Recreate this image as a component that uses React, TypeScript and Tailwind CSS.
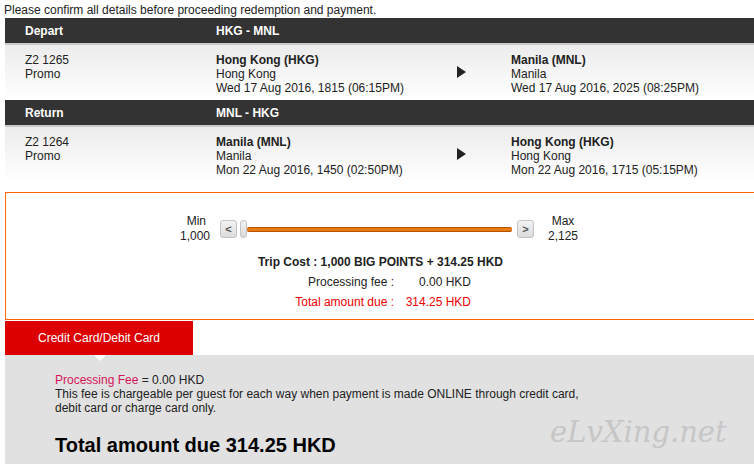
import React from 'react';

type Leg = {
  label: string;
  route: string;
  flight: string;
  fare: string;
  from: { city: string; name: string; time: string };
  to: { city: string; name: string; time: string };
};

const legs: Leg[] = [
  {
    label: 'Depart',
    route: 'HKG - MNL',
    flight: 'Z2 1265',
    fare: 'Promo',
    from: { city: 'Hong Kong (HKG)', name: 'Hong Kong', time: 'Wed 17 Aug 2016, 1815 (06:15PM)' },
    to: { city: 'Manila (MNL)', name: 'Manila', time: 'Wed 17 Aug 2016, 2025 (08:25PM)' },
  },
  {
    label: 'Return',
    route: 'MNL - HKG',
    flight: 'Z2 1264',
    fare: 'Promo',
    from: { city: 'Manila (MNL)', name: 'Manila', time: 'Mon 22 Aug 2016, 1450 (02:50PM)' },
    to: { city: 'Hong Kong (HKG)', name: 'Hong Kong', time: 'Mon 22 Aug 2016, 1715 (05:15PM)' },
  },
];

const Arrow = () => (
  <svg width="10" height="12" viewBox="0 0 10 12">
    <path d="M0 0 L9 6 L0 12 Z" fill="#222" />
  </svg>
);

const LegBlock = ({ leg }: { leg: Leg }) => (
  <div>
    <div className="flex h-[25px] items-center bg-[#333] font-bold text-white">
      <div className="w-[211px] pl-[20px]">{leg.label}</div>
      <div>{leg.route}</div>
    </div>
    <div className="h-[2px] bg-[#c9c9c9]" />
    <div className="flex h-[55px] bg-gradient-to-b from-[#ececec] to-white pt-[8px] leading-[14px] text-[#222]">
      <div className="w-[211px] pl-[20px]">
        <div>{leg.flight}</div>
        <div>{leg.fare}</div>
      </div>
      <div className="w-[241px]">
        <div className="font-bold">{leg.from.city}</div>
        <div>{leg.from.name}</div>
        <div>{leg.from.time}</div>
      </div>
      <div className="w-[54px] pt-[13px]">
        <Arrow />
      </div>
      <div>
        <div className="font-bold">{leg.to.city}</div>
        <div>{leg.to.name}</div>
        <div>{leg.to.time}</div>
      </div>
    </div>
  </div>
);

const SliderButton = ({ label }: { label: string }) => (
  <div className="flex h-[18px] w-[17px] items-center justify-center rounded-[3px] border border-[#c4c4c4] bg-gradient-to-b from-[#f2f2f2] to-[#dcdcdc] text-[11px] font-bold text-[#555]">
    {label}
  </div>
);

export default function App() {
  return (
    <div className="w-[754px] h-[464px] overflow-hidden bg-white font-['Liberation_Sans',Arial,sans-serif] text-[12px] text-[#222]">
      <p className="h-[18px] pl-[4px] leading-[20px]">Please confirm all details before proceeding redemption and payment.</p>

      <div className="ml-[5px] w-[760px]">
        {legs.map((leg) => (
          <LegBlock key={leg.label} leg={leg} />
        ))}

        <div className="mt-[10px] h-[128px] border border-[#ff6600] pt-[19px]">
          <div className="flex items-start">
            <div className="mt-[2px] w-[204px] text-right leading-[15px]">
              <div className="pr-[4px]">Min</div>
              <div>1,000</div>
            </div>
            <div className="ml-[10px] mt-[8px] flex items-center">
              <SliderButton label="<" />
              <div className="ml-[3px] h-[18px] w-[7px] rounded-[3px] border border-[#c4c4c4] bg-gradient-to-b from-[#f4f4f4] to-[#dadada]" />
              <div className="h-[5px] w-[265px] rounded-[2px] border-y border-[#b85400] bg-[#e87a14]" />
              <div className="ml-[5px]">
                <SliderButton label=">" />
              </div>
            </div>
            <div className="ml-[14px] mt-[2px] leading-[15px] text-center">
              <div>Max</div>
              <div>2,125</div>
            </div>
          </div>

          <div className="mt-[9px] w-[749px] text-center font-bold">Trip Cost : 1,000 BIG POINTS + 314.25 HKD</div>
          <div className="mt-[2px] flex">
            <div className="w-[388px] text-right">Processing fee :</div>
            <div className="w-[77px] text-right">0.00 HKD</div>
          </div>
          <div className="mt-[2px] flex text-[#ee0000]">
            <div className="w-[388px] text-right">Total amount due :</div>
            <div className="w-[77px] text-right">314.25 HKD</div>
          </div>
        </div>

        <div className="mt-[1px] flex h-[34px] w-[188px] items-center justify-center bg-[#dd0000] text-white">
          Credit Card/Debit Card
        </div>

        <div className="relative h-[120px] bg-[#e1e1e1] pl-[50px] pt-[18px] leading-[14px]">
          <div className="absolute left-[89px] top-0 h-0 w-0 border-x-[6px] border-t-[6px] border-x-transparent border-t-white" />
          <div>
            <span className="text-[#d4145a]">Processing Fee</span> = 0.00 HKD
          </div>
          <div>This fee is chargeable per guest for each way when payment is made ONLINE through credit card,</div>
          <div>debit card or charge card only.</div>
          <div className="mt-[18px] text-[20px] font-bold leading-[24px] text-black">Total amount due 314.25 HKD</div>
          <div className="absolute left-[545px] top-[56px] font-['DejaVu_Serif',serif] text-[29px] italic leading-[43px] text-[#c6c6c6]">
            eLvXing.net
          </div>
        </div>
      </div>
    </div>
  );
}
